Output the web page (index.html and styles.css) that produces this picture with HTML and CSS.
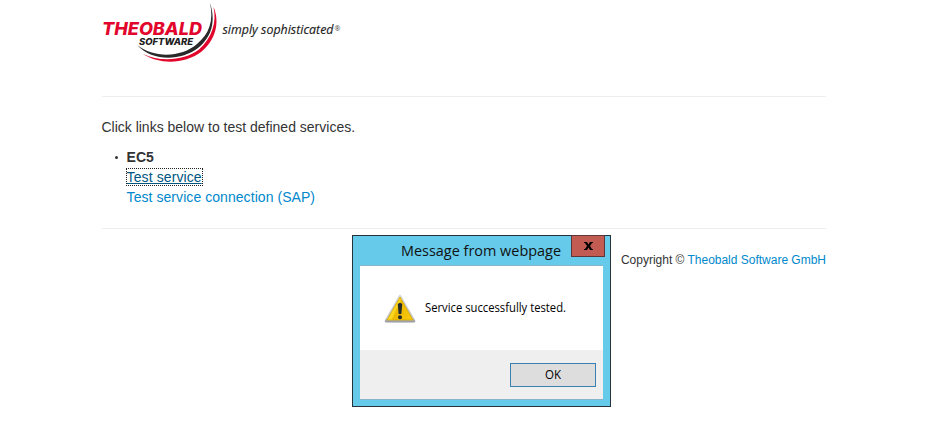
FILE: index.html
```html
<!DOCTYPE html>
<html lang="en">
<head>
<meta charset="utf-8">
<title>Test services</title>
<link rel="stylesheet" href="styles.css">
</head>
<body>
<div class="container">
  <header class="header">
    <svg class="logo" width="244" height="66" viewBox="101 0 244 66" role="img" aria-label="Theobald Software">
      <path class="swoosh-dark" d="M210 3C214 21 209 34 197 44C182 57 155 59 137 45C153 62 181 61 198 48C212 37 216 21 210 3Z"/>
      <path class="swoosh-red" d="M213.500 7C217 22 212 38 199 49.500C184 61 160 62 143 54C160 65 185 64 201 52C216 40 220 22 213.500 7Z"/>
      <text class="logo-name" x="102" y="34.500" textLength="100" lengthAdjust="spacingAndGlyphs">THEOBALD</text>
      <text class="logo-sub" x="139" y="45" textLength="54" lengthAdjust="spacingAndGlyphs">SOFTWARE</text>
      <text class="slogan" x="222.500" y="34" textLength="111" lengthAdjust="spacingAndGlyphs">simply sophisticated</text>
      <text class="registered" x="334.500" y="31">®</text>
    </svg>
  </header>
  <main class="content">
    <p class="intro">Click links below to test defined services.</p>
    <ul class="services">
      <li><strong>EC5</strong><br>
        <a class="focused" href="#">Test service</a><br>
        <a class="wide" href="#">Test service connection (SAP)</a></li>
    </ul>
  </main>
  <footer class="footer">Copyright © <a href="#">Theobald Software GmbH</a></footer>
</div>
<section class="dialog" role="alertdialog">
  <div class="titlebar">
    <svg class="title" width="162" height="24"><text x="0" y="18" textLength="160" lengthAdjust="spacingAndGlyphs">Message from webpage</text></svg>
    <button class="close" aria-label="Close"><svg width="9" height="8" viewBox="0 0 9 8"><path d="M0 0H3L4.500 2.500L6 0H9V1H8L6 4L8 7H9V8H6L4.500 5.500L3 8H0V7H1L3 4L1 1H0Z"/></svg></button>
  </div>
  <div class="dialog-panel">
    <div class="message">
      <svg class="warning" width="32" height="30" viewBox="0 0 32 30">
        <defs>
          <linearGradient id="gold" x2="1" y2=".4"><stop stop-color="#ffe45c"/><stop offset=".48" stop-color="#fbd51b"/><stop offset=".52" stop-color="#eeb700"/><stop offset="1" stop-color="#f5c60a"/></linearGradient>
          <linearGradient id="rim" x2="0" y2="1"><stop stop-color="#d2d5da"/><stop offset=".85" stop-color="#c2c4c8"/><stop offset="1" stop-color="#92959a"/></linearGradient>
        </defs>
        <path d="M15 1.500Q16 .2 17 1.500L31 26Q32 28.500 29.500 28.500H2.500Q0 28.500 1 26Z" fill="url(#rim)"/>
        <path d="M16 3L29 26H3Z" fill="url(#gold)" stroke="#dba800" stroke-width=".8"/>
        <path d="M13.800 10Q16 8 18.200 10L17.400 20H14.600Z" fill="#252a2d"/>
        <circle cx="16" cy="23.300" r="2" fill="#252a2d"/>
      </svg>
      <svg class="message-text" width="146" height="20"><text x="0" y="14" textLength="141" lengthAdjust="spacingAndGlyphs">Service successfully tested.</text></svg>
    </div>
    <div class="actions"><button class="ok"><svg width="17" height="16"><text x="0" y="12" textLength="16" lengthAdjust="spacingAndGlyphs">OK</text></svg></button></div>
  </div>
</section>
</body>
</html>
```
FILE: styles.css
```css
* { box-sizing: border-box; }
body {
  margin: 0;
  background: #fff;
  color: #333;
  font: 14px/20px "Liberation Sans", Arial, sans-serif;
}
svg { display: block; }
a { color: #0088cc; text-decoration: none; }
.container { width: 724px; margin-left: 102px; }
.header { height: 97px; border-bottom: 1px solid #eee; }
.logo { margin-left: -1px; }
.swoosh-dark { fill: #292929; }
.swoosh-red { fill: #e2062c; }
.logo-name { font: italic 800 17px Inter, "Liberation Sans", sans-serif; fill: #e2062c; }
.logo-sub { font: italic 800 9px Inter, "Liberation Sans", sans-serif; fill: #202020; }
.slogan { font: italic 12px "Open Sans", sans-serif; fill: #222; stroke: #222; stroke-width: .15; }
.registered { font: 7px "Open Sans", sans-serif; fill: #444; }
.content { height: 132px; padding-top: 20px; border-bottom: 1px solid #eee; }
.intro { margin: 0 0 10px -.6px; }
.services { margin: 0; padding-left: 24.6px; list-style: none; }
.services li::before {
  content: "";
  float: left;
  width: 3px;
  height: 3px;
  margin: 9px 0 0 -12px;
  border-radius: 50%;
  background: #333;
}
.focused { color: #005580; text-decoration: underline; outline: 1px dotted #222; letter-spacing: .1px; }
.wide { letter-spacing: .06px; }
.footer { padding-top: 21px; font-size: 12px; text-align: right; letter-spacing: -.01px; }
.dialog {
  position: absolute;
  left: 352px;
  top: 235px;
  width: 259px;
  height: 172px;
  padding: 0 7px 7px;
  border: 1px solid #25343b;
  background: #66caea;
}
.titlebar { display: flex; height: 29px; padding-left: 41px; }
.title { flex: none; margin-top: 2px; font: 15px "Open Sans", sans-serif; fill: #111; }
.close {
  display: flex;
  align-items: center;
  justify-content: center;
  flex: none;
  width: 34px;
  height: 22px;
  margin: -1px 0 0 8px;
  padding: 0;
  border: 1px solid #603638;
  background: #c25b52;
}
.dialog-panel { height: 135px; border: 1px solid #87b4cb; border-width: 1px 0; background: #efefef; }
.message { display: flex; height: 84px; padding: 28px 0 0 24px; background: #fff; }
.message-text { margin: 4px 0 0 9px; font: 12px "Open Sans", sans-serif; fill: #000; }
.actions { display: flex; justify-content: flex-end; padding: 13px 7px 0 0; }
.ok {
  display: flex;
  align-items: center;
  justify-content: center;
  width: 86px;
  height: 24px;
  padding: 0;
  border: 1px solid #3c7fb1;
  background: #ddd;
}
.ok text { font: 12px "Open Sans", sans-serif; }
```
